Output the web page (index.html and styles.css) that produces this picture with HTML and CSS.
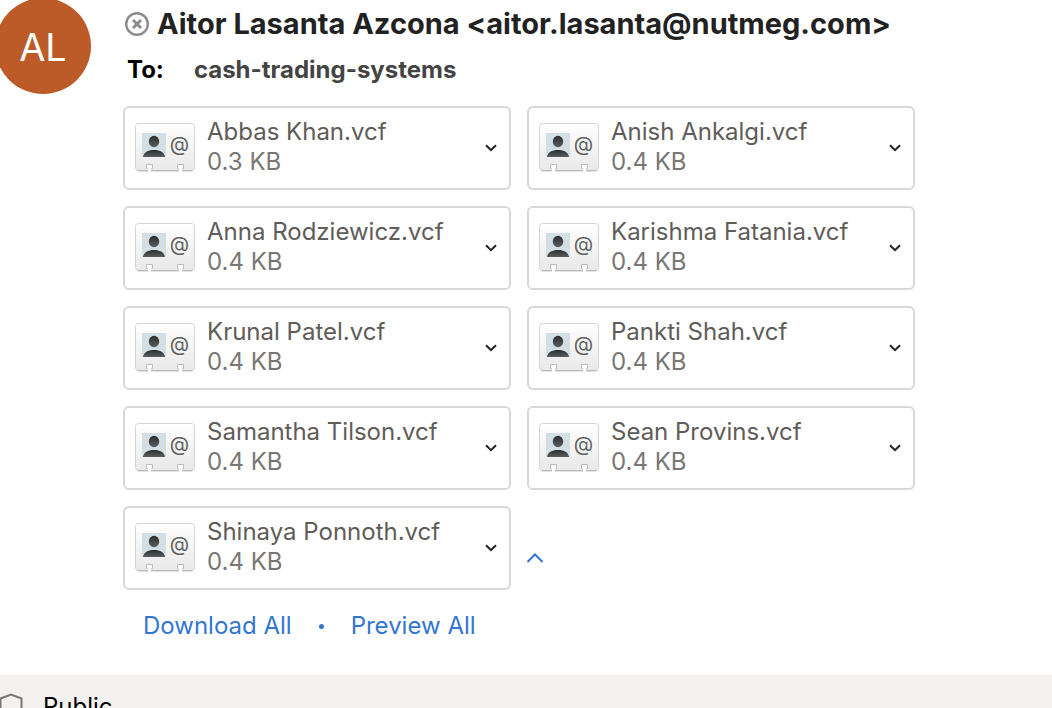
FILE: index.html
```html
<!DOCTYPE html>
<html lang="en">
<head>
<meta charset="utf-8">
<meta name="viewport" content="width=device-width, initial-scale=1">
<title>Message</title>
<link rel="stylesheet" href="styles.css">
</head>
<body>
<svg class="sprite" width="0" height="0" aria-hidden="true">
  <defs>
    <linearGradient id="paper" x1="0" y1="0" x2="0" y2="1">
      <stop offset="0" stop-color="#ffffff"/>
      <stop offset="1" stop-color="#e9e9e9"/>
    </linearGradient>
    <linearGradient id="person" x1="0" y1="0" x2="0" y2="1">
      <stop offset="0" stop-color="#2b2e2e"/>
      <stop offset="1" stop-color="#5a5e5e"/>
    </linearGradient>
    <symbol id="vcard" viewBox="0 0 60 50">
      <rect x=".5" y=".5" width="59" height="47" rx="3" fill="url(#paper)" stroke="#d4d4d4"/>
      <path d="M2.500 47.500h55" stroke="#b9b9b9" fill="none"/>
      <path d="M3 48.500h54" stroke="#e4e4e4" fill="none"/>
      <path d="M12 42h5v3h-1v4h-3v-4h-1zM43 42h5v3h-1v4h-3v-4h-1z" fill="#fff"/>
      <path d="M12.500 45.500h-1v-4h6v4h-1M43.500 45.500h-1v-4h6v4h-1" fill="none" stroke="#bcbcbc"/>
      <path d="M7 10h24v24H7z" fill="#d3dfe4"/>
      <ellipse cx="19" cy="18.500" rx="5.200" ry="5.700" fill="url(#person)"/>
      <path d="M8 34c.5-4.500 5-7 11-7s10.500 2.500 11 7z" fill="url(#person)"/>
    </symbol>
    <symbol id="chevron" viewBox="0 0 12 8">
      <path d="M1 1.200l5 5 5-5" fill="none" stroke="currentColor" stroke-width="2"/>
    </symbol>
  </defs>
</svg>

<main class="message">
  <div class="avatar">AL</div>
  <div class="content">
    <header class="sender">
      <svg class="status" viewBox="0 0 24 24" aria-hidden="true"><circle cx="12" cy="12" r="10.800"/><path d="M8 8l8 8M16 8l-8 8" stroke-width="3"/></svg>
      <h1 class="sender-name">Aitor Lasanta Azcona &lt;aitor.lasanta@nutmeg.com&gt;</h1>
    </header>
    <div class="recipients"><span class="to">To:</span><span class="recipient">cash-trading-systems</span></div>

    <ul class="files">
      <li class="file"><span class="thumb"><svg class="card-icon" aria-hidden="true"><use href="#vcard"/></svg><span class="at">@</span></span><span class="info"><span class="name">Abbas Khan.vcf</span><span class="size">0.3 KB</span></span><button class="more" type="button" aria-label="Options for Abbas Khan.vcf"><svg class="chevron"><use href="#chevron"/></svg></button></li>
      <li class="file"><span class="thumb"><svg class="card-icon" aria-hidden="true"><use href="#vcard"/></svg><span class="at">@</span></span><span class="info"><span class="name">Anish Ankalgi.vcf</span><span class="size">0.4 KB</span></span><button class="more" type="button" aria-label="Options for Anish Ankalgi.vcf"><svg class="chevron"><use href="#chevron"/></svg></button></li>
      <li class="file"><span class="thumb"><svg class="card-icon" aria-hidden="true"><use href="#vcard"/></svg><span class="at">@</span></span><span class="info"><span class="name">Anna Rodziewicz.vcf</span><span class="size">0.4 KB</span></span><button class="more" type="button" aria-label="Options for Anna Rodziewicz.vcf"><svg class="chevron"><use href="#chevron"/></svg></button></li>
      <li class="file"><span class="thumb"><svg class="card-icon" aria-hidden="true"><use href="#vcard"/></svg><span class="at">@</span></span><span class="info"><span class="name">Karishma Fatania.vcf</span><span class="size">0.4 KB</span></span><button class="more" type="button" aria-label="Options for Karishma Fatania.vcf"><svg class="chevron"><use href="#chevron"/></svg></button></li>
      <li class="file"><span class="thumb"><svg class="card-icon" aria-hidden="true"><use href="#vcard"/></svg><span class="at">@</span></span><span class="info"><span class="name">Krunal Patel.vcf</span><span class="size">0.4 KB</span></span><button class="more" type="button" aria-label="Options for Krunal Patel.vcf"><svg class="chevron"><use href="#chevron"/></svg></button></li>
      <li class="file"><span class="thumb"><svg class="card-icon" aria-hidden="true"><use href="#vcard"/></svg><span class="at">@</span></span><span class="info"><span class="name">Pankti Shah.vcf</span><span class="size">0.4 KB</span></span><button class="more" type="button" aria-label="Options for Pankti Shah.vcf"><svg class="chevron"><use href="#chevron"/></svg></button></li>
      <li class="file"><span class="thumb"><svg class="card-icon" aria-hidden="true"><use href="#vcard"/></svg><span class="at">@</span></span><span class="info"><span class="name">Samantha Tilson.vcf</span><span class="size">0.4 KB</span></span><button class="more" type="button" aria-label="Options for Samantha Tilson.vcf"><svg class="chevron"><use href="#chevron"/></svg></button></li>
      <li class="file"><span class="thumb"><svg class="card-icon" aria-hidden="true"><use href="#vcard"/></svg><span class="at">@</span></span><span class="info"><span class="name">Sean Provins.vcf</span><span class="size">0.4 KB</span></span><button class="more" type="button" aria-label="Options for Sean Provins.vcf"><svg class="chevron"><use href="#chevron"/></svg></button></li>
      <li class="file"><span class="thumb"><svg class="card-icon" aria-hidden="true"><use href="#vcard"/></svg><span class="at">@</span></span><span class="info"><span class="name">Shinaya Ponnoth.vcf</span><span class="size">0.4 KB</span></span><button class="more" type="button" aria-label="Options for Shinaya Ponnoth.vcf"><svg class="chevron"><use href="#chevron"/></svg></button></li>
      <li class="fold"><button class="collapse" type="button" aria-label="Show fewer attachments"><svg class="collapse-icon" viewBox="0 0 16 10"><path d="M.5 9L8 1.500 15.500 9"/></svg></button></li>
    </ul>

    <nav class="actions">
      <a class="action" href="#download">Download All</a>
      <span class="dot"></span>
      <a class="action" href="#preview">Preview All</a>
    </nav>
  </div>
</main>
<footer class="sensitivity">
  <svg class="shield" viewBox="0 0 24 28" aria-hidden="true"><path d="M.5 28V6.500L11 2.500l10.500 4V28"/></svg>
  <span>Public</span>
</footer>
</body>
</html>
```

FILE: styles.css
```css
* { box-sizing: border-box; }
html, body { height: 100%; }
body {
  margin: 0;
  display: flex;
  flex-direction: column;
  overflow: hidden;
  background: #fff;
  font-family: Inter, "Liberation Sans", sans-serif;
  font-size: 24px;
  line-height: 30px;
}
.sprite { position: absolute; }
.message {
  display: flex;
  align-items: flex-start;
  gap: 32px;
  flex-shrink: 0;
  padding-bottom: 34px;
}
.avatar {
  display: flex;
  align-items: center;
  justify-content: center;
  flex-shrink: 0;
  width: 96px;
  height: 96px;
  margin: -2px 0 0 -5px;
  padding-top: 2px;
  border-radius: 50%;
  background: #bc5a28;
  color: #fff;
  font-size: 38px;
}
.content { flex: 1; min-width: 0; }
.sender {
  display: flex;
  align-items: center;
  gap: 8px;
  padding: 4px 0 0 2px;
}
.status {
  width: 24px;
  height: 24px;
  flex-shrink: 0;
  fill: none;
  stroke: #8c8c8a;
  stroke-width: 2.400;
}
.sender-name {
  margin: 0;
  color: #222;
  font-size: 29px;
  font-weight: 700;
  line-height: 40px;
  white-space: nowrap;
}
.recipients {
  display: flex;
  gap: 30px;
  padding: 11px 0 21px 4px;
  font-weight: 700;
}
.to { color: #000; }
.recipient { color: #444; }
.files {
  display: grid;
  grid-template-columns: repeat(2, minmax(0, 388px));
  gap: 16px;
  margin: 0;
  padding: 0;
  list-style: none;
}
.file {
  display: flex;
  align-items: center;
  gap: 12px;
  padding: 9px 12px 9px 10px;
  border: 2px solid #d8d8d8;
  border-radius: 6px;
}
.thumb {
  position: relative;
  width: 60px;
  height: 50px;
  flex-shrink: 0;
}
.card-icon { display: block; width: 60px; height: 50px; }
.at {
  position: absolute;
  top: 6px;
  right: 6px;
  color: #626262;
  font-size: 20px;
}
.info {
  display: flex;
  flex-direction: column;
  flex: 1;
  min-width: 0;
  padding-bottom: 2px;
}
.name { color: #605c59; white-space: nowrap; }
.size { color: #797775; }
.more, .collapse {
  display: flex;
  padding: 0;
  border: 0;
  background: none;
}
.more { color: #222; }
.chevron { width: 12px; height: 8px; }
.fold { display: flex; align-items: center; padding-top: 20px; }
.collapse-icon {
  width: 16px;
  height: 10px;
  fill: none;
  stroke: #3276d1;
  stroke-width: 2;
}
.actions {
  display: flex;
  align-items: center;
  gap: 27px;
  padding: 21px 0 0 20px;
}
.action { color: #3276d1; text-decoration: none; }
.dot { width: 5px; height: 5px; border-radius: 50%; background: #3276d1; }
.sensitivity {
  display: flex;
  align-items: flex-start;
  gap: 19px;
  flex: 1 0 60px;
  padding-top: 17px;
  background: #f2f1ef;
  color: #000;
}
.shield {
  width: 24px;
  height: 28px;
  fill: none;
  stroke: #777;
  stroke-width: 2;
}
```
